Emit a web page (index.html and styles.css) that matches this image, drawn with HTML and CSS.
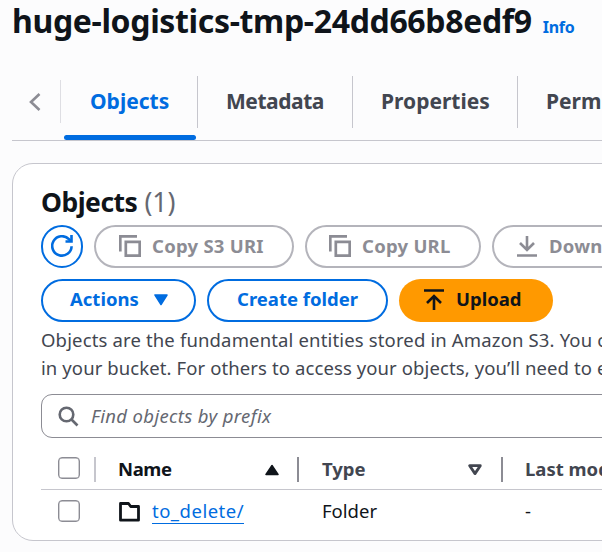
FILE: index.html
```html
<!DOCTYPE html>
<html lang="en">
<head>
<meta charset="utf-8">
<title>huge-logistics-tmp-24dd66b8edf9</title>
<link rel="stylesheet" href="styles.css">
</head>
<body>
<header class="page-header">
  <h1 class="page-title">huge-logistics-tmp-24dd66b8edf9</h1>
  <a class="info">Info</a>
</header>
<nav class="tabs">
  <span class="tabs-back"><svg width="14" height="20" viewBox="0 0 14 20"><path d="M11.500 2 3 10l8.500 8" fill="none" stroke="#8c8c94" stroke-width="2.600"/></svg></span>
  <div class="tab tab-active"><span class="tab-label">Objects</span></div>
  <div class="tab tab-metadata"><span class="tab-label">Metadata</span></div>
  <div class="tab tab-properties"><span class="tab-label">Properties</span></div>
  <div class="tab tab-permissions"><span class="tab-label">Permissions</span></div>
</nav>
<main class="card">
  <h2 class="card-title"><span class="heading">Objects</span><span class="count">(1)</span></h2>
  <div class="button-row">
    <button class="btn btn-refresh" aria-label="Refresh"><svg class="icon-refresh" width="22" height="22" viewBox="0 0 22 22" fill="none" stroke="currentColor" stroke-width="2.600"><path d="M20.600 11.200A9.700 9.700 0 1 1 17.900 4.200L20 6.400"/><path d="M20.500 0v6.500H14.500"/></svg></button>
    <button class="btn btn-disabled btn-s3"><svg class="icon-copy" width="22" height="22" viewBox="0 0 22 22" fill="none" stroke="currentColor" stroke-width="2.700"><path d="M1.300 16.500V1.300H18"/><path d="M6.800 6.800h13.900v13.900H6.800z"/></svg><span class="label">Copy S3 URI</span></button>
    <button class="btn btn-disabled btn-url"><svg class="icon-copy" width="22" height="22" viewBox="0 0 22 22" fill="none" stroke="currentColor" stroke-width="2.700"><path d="M1.300 16.500V1.300H18"/><path d="M6.800 6.800h13.900v13.900H6.800z"/></svg><span class="label">Copy URL</span></button>
    <button class="btn btn-disabled btn-download"><svg class="icon-download" width="20" height="21" viewBox="0 0 20 21" fill="none" stroke="currentColor" stroke-width="2.600"><path d="M10 0v14M3 7l7 7 7-7M0 19.500h20"/></svg><span class="label">Download</span></button>
  </div>
  <div class="button-row button-row-second">
    <button class="btn btn-normal btn-actions"><span class="label">Actions</span><svg width="14" height="12" viewBox="0 0 14 12"><path d="M1 1h12L7 10.500z" fill="currentColor" stroke="currentColor" stroke-width="1.500" stroke-linejoin="round"/></svg></button>
    <button class="btn btn-normal btn-create"><span class="label">Create folder</span></button>
    <button class="btn btn-primary"><svg width="20" height="21" viewBox="0 0 20 21" fill="none" stroke="currentColor" stroke-width="2.600"><path d="M0 1.500h20M10 21V7.500M3 14l7-7 7 7"/></svg><span class="label">Upload</span></button>
  </div>
  <p class="description"><span class="line line-one">Objects are the fundamental entities stored in Amazon S3. You can use</span><span class="line line-two">in your bucket. For others to access your objects, you’ll need to explicitly</span></p>
  <div class="search">
    <svg width="21" height="21" viewBox="0 0 21 21" fill="none" stroke="#656871" stroke-width="2.600"><circle cx="8.500" cy="8.500" r="6.800"/><path d="m13.500 13.500 6 6"/></svg>
    <span class="placeholder">Find objects by prefix</span>
  </div>
  <div class="table">
    <div class="row row-head">
      <div class="cell cell-check"><i class="checkbox"></i><i class="divider divider-light"></i></div>
      <div class="cell cell-name"><span class="label sorted">Name</span><svg width="14" height="12" viewBox="0 0 14 12"><path d="M1 10.500h12L7 1.500z" fill="#0f141a" stroke="#0f141a" stroke-width="1.500" stroke-linejoin="round"/></svg><i class="divider"></i></div>
      <div class="cell cell-type"><span class="label">Type</span><svg width="14" height="12" viewBox="0 0 14 12"><path d="M1.700 1.700h10.600L7 9.600z" fill="none" stroke="#424650" stroke-width="2.800" stroke-linejoin="round"/></svg><i class="divider"></i></div>
      <div class="cell cell-modified"><span class="label">Last modified</span></div>
    </div>
    <div class="row row-body">
      <div class="cell cell-check"><i class="checkbox"></i></div>
      <div class="cell cell-name"><svg width="21" height="20" viewBox="0 0 21 20"><path d="M1.500 18.200V1.500h8l2.200 3h7.800v13.700z" fill="none" stroke="#0f141a" stroke-width="2.800" stroke-linejoin="round"/></svg><a class="object-link">to_delete/</a></div>
      <div class="cell cell-type"><span class="value">Folder</span></div>
      <div class="cell cell-modified"><span class="value">-</span></div>
    </div>
  </div>
</main>
</body>
</html>
```
FILE: styles.css
```css
* { box-sizing: border-box; }

body {
  margin: 0;
  height: 552px;
  overflow: hidden;
  background: #fcfcfd;
  color: #0f141a;
  font-family: "Noto Sans", "Open Sans", sans-serif;
  font-size: 18.500px;
  white-space: nowrap;
}

h1, h2, p { margin: 0; }

.page-header {
  display: flex;
  align-items: baseline;
  gap: 11px;
  height: 76px;
  padding-left: 12px;
}
.page-title { font-size: 32px; line-height: 42px; font-weight: 700; letter-spacing: -0.350px; }
.info { color: #006ce0; font-size: 16px; font-weight: 700; letter-spacing: -0.300px; }

.tabs {
  display: flex;
  height: 65px;
  margin-left: 12px;
  overflow: hidden;
  border-bottom: 1px solid #c6c6cd;
}
.tabs-back {
  display: flex;
  flex: none;
  align-items: center;
  height: 43px;
  width: 49px;
  margin: 4px 3px 0 0;
  padding-left: 16px;
  border-right: 1px solid #dedee3;
}
.tab {
  flex: none;
  height: 52px;
  padding-left: 28px;
  border-right: 1px solid #c6c6cd;
  color: #424650;
  font-size: 21px;
  line-height: 51px;
  font-weight: 700;
}
.tab-active {
  width: 134px;
  height: 64px;
  padding-left: 26px;
  border-right: 0;
  background: linear-gradient(#c6c6cd, #c6c6cd) right top / 1px 52px no-repeat;
  color: #006ce0;
}
.tab-active::after {
  content: "";
  display: block;
  width: 132px;
  height: 5px;
  margin: 8px 0 0 -26px;
  border-radius: 3px;
  background: #006ce0;
}
.tab-metadata { width: 155px; letter-spacing: -0.450px; }
.tab-properties { width: 165px; }
.tab-label { display: block; }

.card {
  width: 720px;
  height: 378px;
  margin: 22px 0 0 12px;
  padding: 20px 0 0 28px;
  border: 1px solid #c6c6cd;
  border-radius: 21px;
  background: #fff;
}
.card-title {
  display: flex;
  gap: 7px;
  height: 41px;
  font-size: 26.500px;
  line-height: 37px;
}
.heading { letter-spacing: -0.500px; }
.count { color: #656871; font-weight: 400; }

.button-row { display: flex; gap: 11px; }
.button-row-second { margin-top: 11px; }
.btn {
  display: flex;
  flex: none;
  align-items: center;
  height: 43px;
  padding: 0 0 2px;
  border: 2px solid currentColor;
  border-radius: 22px;
  background: #fff;
  font-family: inherit;
  font-size: 18.500px;
  font-weight: 700;
  line-height: 28px;
}
.label { font-weight: 700; }
.button-row-second .label { margin-top: -2px; }
.icon-refresh { margin-top: 1px; }
.icon-copy { margin-top: 1px; }
.icon-download { margin-top: 2px; }
.btn-refresh { width: 42px; justify-content: center; color: #006ce0; }
.btn-disabled { border-color: #b4b4bb; color: #8c8c94; letter-spacing: 0.250px; }
.btn-normal { color: #006ce0; }
.btn-s3 { width: 200px; padding-left: 23px; gap: 11px; }
.btn-url { width: 176px; padding-left: 22px; gap: 11px; }
.btn-download { width: 200px; padding-left: 23px; gap: 12px; }
.btn-actions { width: 155px; padding-left: 27px; gap: 15px; }
.btn-create { width: 181px; padding-left: 28px; }
.btn-primary {
  width: 154px;
  padding-left: 25px;
  gap: 12px;
  border: 0;
  background: #ff9900;
  color: #0f141a;
}

.description {
  margin-top: 4px;
  color: #424650;
  line-height: 28px;
}
.line { display: block; }
.line-one { letter-spacing: 0.150px; }
.line-two { letter-spacing: 0.100px; }

.search {
  display: flex;
  align-items: center;
  height: 44px;
  margin-top: 12px;
  padding-left: 16px;
  gap: 12px;
  border: 1px solid #8c8c94;
  border-radius: 11px;
}
.placeholder { margin-top: -2px; color: #656871; font-style: italic; letter-spacing: 0.350px; }

.row { display: flex; }
.row-head { height: 52px; border-bottom: 1px solid #c6c6cd; color: #424650; }
.row-body { height: 50px; }
.cell { display: flex; }
.cell-check { width: 56px; padding: 19px 0 0 17px; }
.row-body .cell-check { padding-top: 10px; }
.checkbox {
  width: 22px;
  height: 22px;
  border: 1px solid #8c8c94;
  border-radius: 4px;
  background: #fff;
  box-shadow: inset 0 0 0 0.400px #8c8c94;
}
.divider {
  width: 2px;
  height: 25px;
  margin: 19px 0 0;
  background: #8c8c94;
}
.divider-light { margin: 0 0 0 14px; background: #c6c6cd; }
.cell-name { width: 203px; padding-left: 22px; }
.cell-type { width: 204px; padding-left: 22px; }
.cell-modified { padding-left: 21px; }
.row-head .label { width: 146px; padding-top: 17px; line-height: 28px; }
.row-head .cell-type .divider { margin-left: 1px; }
.row-head svg { margin: 26px 18px 0 0; flex: none; }
.row-head .cell-modified .label { width: auto; }
.row-head .sorted { margin-left: -1px; width: 147px; color: #0f141a; letter-spacing: -0.400px; }
.row-body .cell-name svg { margin: 12px 12px 0 0; }
.value { padding-top: 7px; line-height: 28px; }
.object-link {
  height: 27px;
  margin-top: 7px;
  border-bottom: 1px solid #006ce0;
  color: #006ce0;
  line-height: 28px;
  letter-spacing: 0.500px;
}
```
